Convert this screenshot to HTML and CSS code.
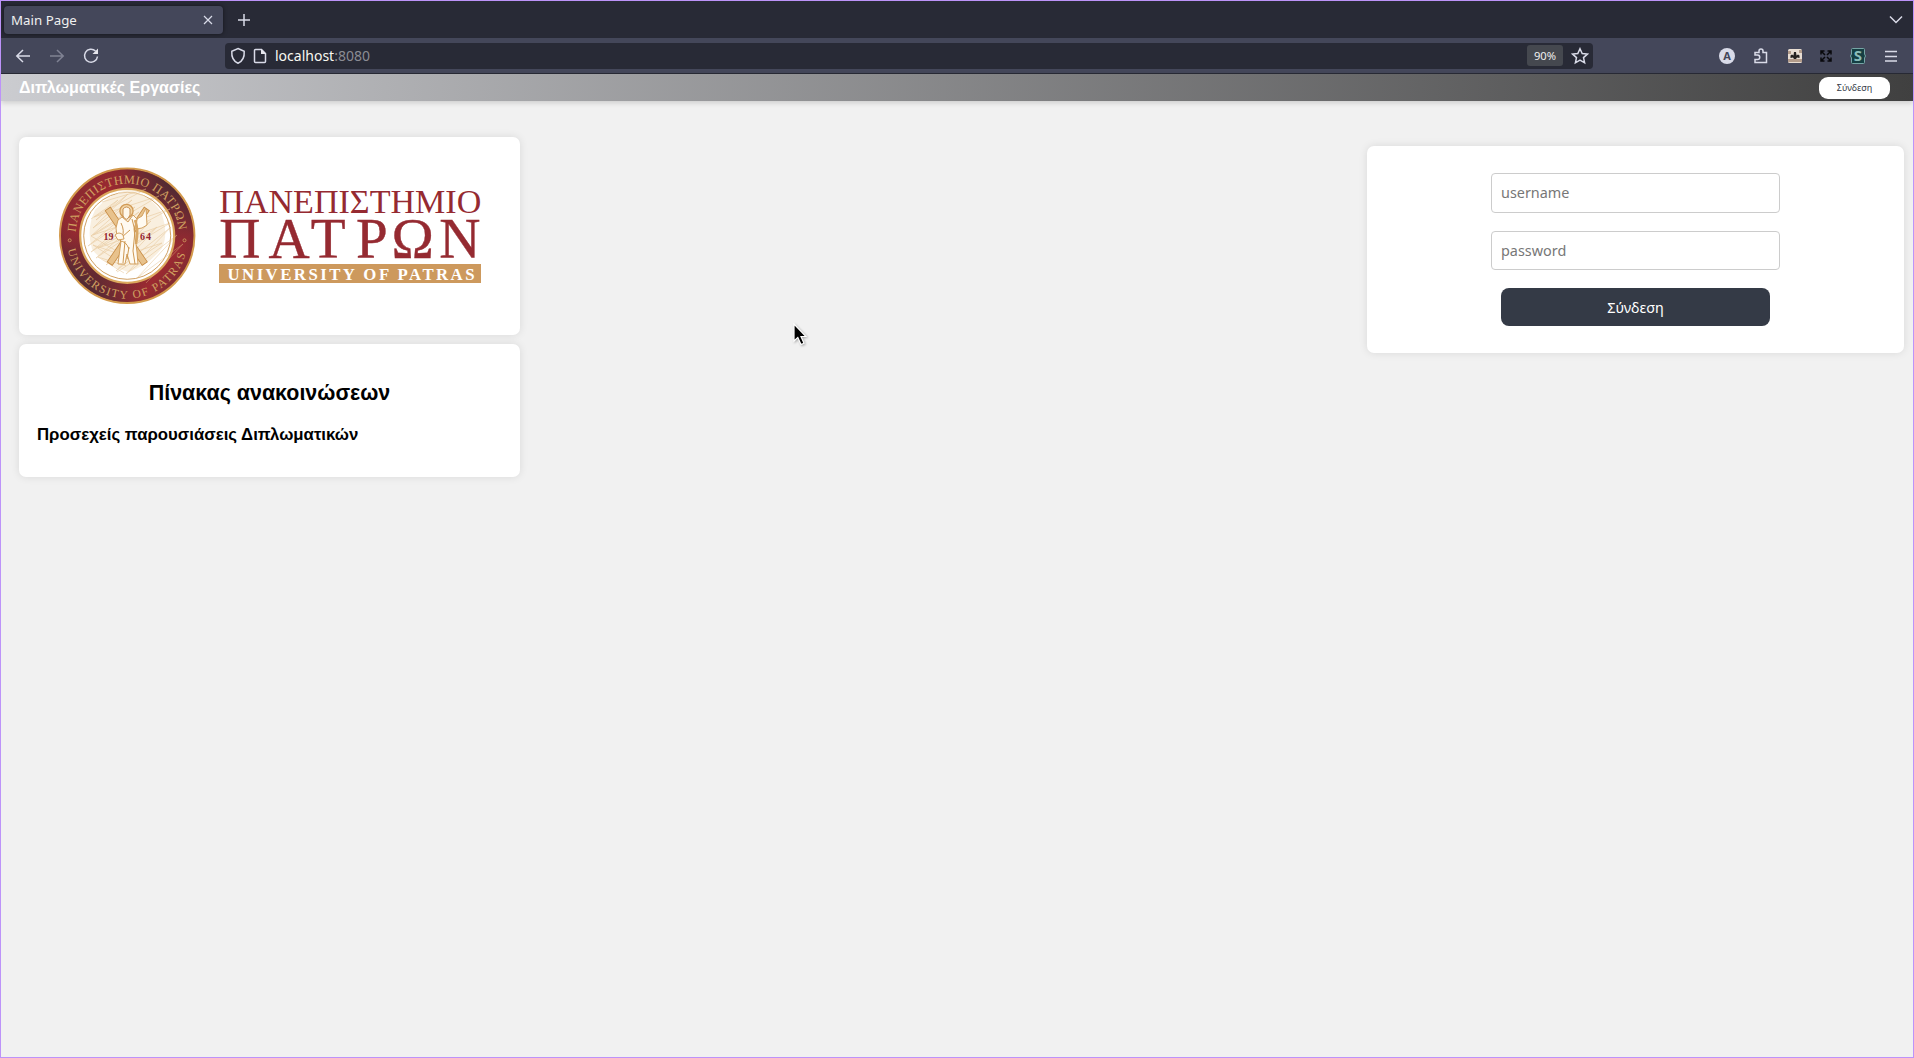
FILE: index.html
```html
<!DOCTYPE html>
<html lang="el">
<head>
<meta charset="utf-8">
<title>Main Page</title>
<link rel="stylesheet" href="styles.css">
</head>
<body>
<div class="window">
  <div class="tabbar">
    <div class="tab"><span>Main Page</span>
      <svg width="10" height="10" viewBox="0 0 10 10"><path d="M1 1l8 8M9 1l-8 8"/></svg>
    </div>
    <svg class="plus" width="14" height="14" viewBox="0 0 14 14"><path d="M7 1v12M1 7h12"/></svg>
    <svg class="chevron" width="14" height="9" viewBox="0 0 14 9"><path d="M1 1.500l6 6 6-6"/></svg>
  </div>
  <div class="toolbar">
    <svg width="16" height="16" viewBox="0 0 16 16"><path d="M15 8H2M8 2L1.800 8 8 14"/></svg>
    <svg class="dim" width="16" height="16" viewBox="0 0 16 16"><path d="M1 8h13M8 2l6.200 6L8 14"/></svg>
    <svg width="16" height="16" viewBox="0 0 16 16"><path d="M12.500 3A6.500 6.500 0 1 0 14.500 8.500"/><path class="solid" d="M15 .5V6H9.500z"/></svg>
    <div class="urlbar">
      <svg width="16" height="18" viewBox="0 0 16 18"><path d="M8 1.500l6.200 2.800c.4 5.500-1.700 10-6.200 12C3.500 14.300 1.400 9.800 1.800 4.300z"/></svg>
      <svg class="page-icon" width="14" height="16" viewBox="0 0 14 16"><path d="M2.500 1.500h6l4 4v8a1 1 0 0 1-1 1h-9a1 1 0 0 1-1-1v-11a1 1 0 0 1 1-1z"/><path class="solid" d="M8 1v5h5z"/></svg>
      <span class="address">localhost<i>:8080</i></span>
      <span class="zoom">90%</span>
      <svg width="18" height="18" viewBox="0 0 18 18"><path d="M9 1.700l2.200 4.800 5.200.6-3.900 3.500 1.100 5.200L9 13.200l-4.600 2.600 1.100-5.200L1.600 7.100l5.200-.6z"/></svg>
    </div>
    <div class="actions">
      <span class="avatar">A</span>
      <svg width="16" height="16" viewBox="0 0 16 16"><path d="M2 7V4.500h4V3a2 2 0 0 1 4 0v1.500h3.500v10H2v-3h2.500a2 2 0 0 0 0-4.500z"/></svg>
      <svg width="14" height="14" viewBox="0 0 14 14"><rect class="tile" width="14" height="14" rx="1.500"/><path class="tile-low" d="M0 10h14v3H0zM0 2h3v3H0zM11 1h3v3h-3z"/><path class="tile-mark" d="M2.500 9V6.500L4 5.500l1.500 1L6 3h2l.5 3.500 1.500-1 1.500 1V9L9 8.500 8 10H6L5 8.500z"/></svg>
      <svg class="expand" width="12" height="12" viewBox="0 0 12 12"><path d="M1 4.500V1h3.500M7.500 1H11v3.500M11 7.500V11H7.500M4.500 11H1V7.500M1 1l4 4M11 1L7 5M11 11L7 7M1 11l4-4"/></svg>
      <svg class="stylus" width="16" height="16" viewBox="0 0 16 16"><path d="M2.500.5h11a1 1 0 0 1 1 1V6l1 2-1 2v4.500a1 1 0 0 1-1 1h-11a1 1 0 0 1-1-1V10l-1-2 1-2V1.500a1 1 0 0 1 1-1z"/><text x="8" y="13.300" text-anchor="middle">S</text></svg>
      <svg width="12" height="12" viewBox="0 0 12 12"><path d="M0 1.500h12M0 6.500h12M0 11h12"/></svg>
    </div>
  </div>
  <header class="site-header">
    <strong>Διπλωματικές Εργασίες</strong>
    <button class="header-login">Σύνδεση</button>
  </header>
  <main class="content">
    <div class="left">
      <section class="card logo">
        <svg width="501" height="198" viewBox="19 137 501 198">
          <defs>
            <linearGradient id="band" x1="0" y1="0.100" x2="1" y2="0.900">
              <stop offset="0" stop-color="#7c2930"/><stop offset=".25" stop-color="#9c2a31"/><stop offset=".5" stop-color="#5c2c33"/><stop offset=".78" stop-color="#9c2a31"/><stop offset="1" stop-color="#642c33"/>
            </linearGradient>
            <linearGradient id="shade" x1="0" y1="1" x2="1" y2="0">
              <stop offset="0.100" stop-color="#412a33"/><stop offset=".4" stop-color="#9a2830" stop-opacity="0"/><stop offset=".6" stop-color="#9a2830" stop-opacity="0"/><stop offset="0.900" stop-color="#412a33"/>
            </linearGradient>
            <path id="arc-top" d="M75.600 232.100A51.700 51.700 0 0 1 178.800 232.100"/>
            <path id="arc-bottom" d="M67.800 249.500A60.500 60.500 0 0 0 186.600 249.500"/>
          </defs>
          <circle cx="127.200" cy="235.800" r="67.200" fill="url(#band)" stroke="#d39a4c" stroke-width="2"/>
          <circle cx="127.200" cy="235.800" r="66.200" fill="url(#shade)"/>
          <circle cx="127.200" cy="235.800" r="47" fill="#fff" stroke="#dba75c" stroke-width="2.200"/>
          <circle cx="127.200" cy="235.800" r="43.500" fill="none" stroke="#c99552" stroke-width=".9"/>
          <path d="M95 210q15-17 33-20 20 3 33 22 8 21 1 36-14 18-34 24-25-8-36-23-6-20 3-39z" fill="#f5e4c9" opacity=".6"/>
          <g fill="none" stroke="#dfb77f" stroke-width=".7" opacity=".6">
            <path d="M91 219l27-19-22 20 32-26-35 34 39-28-41 36 44-29-47 39 51-34-48 40 54-36-49 42 55-37-45 44 51-38-41 44 55-44-45 47 51-39-40 43 46-34-37 39"/>
            <path d="M91 236l34 20-32-11 33 21-28-9 26 16"/>
            <path d="M102 202l44-13-52 28 65-21-66 39 77-26-72 39 72-25-60 37 52-17-45 29"/>
          </g>
          <g>
            <path d="M107.500 208.500l37.500 55.500M147 208.500l-37.500 55.500" stroke="#c88d46" stroke-width="7"/>
            <path d="M108 209.300l36.500 54M146.500 209.300l-36.500 54" stroke="#e8c28c" stroke-width="5.400"/>
          </g>
          <path d="M137 219l5-3 4-8 1 17-5 3-6 1z" fill="#fffaf1" stroke="#ce9852" stroke-width=".9"/>
          <circle cx="126.500" cy="211" r="6.600" fill="#f1d4a6" stroke="#d19a55" stroke-width="1.300"/>
          <path d="M122 217l-4 3-2 8 1 9 4 4-3 23h7l2-10 3 10h8l-1-12-3-23 3-10-4-4-5 7z" fill="#fffaf1" stroke="#ce9852" stroke-width=".9"/>
          <path d="M132 219l3 12-2 20 2 13M121 223q4 8 1 14l8-7M120 241q6 0 9 8M125 241l-2 22M129 247l-2 12" fill="none" stroke="#ce9852" stroke-width="1"/>
          <path d="M135 220q4 10 1 24" fill="none" stroke="#d9a866" stroke-width="2.500"/>
          <path d="M123 209q3.500-4 7 0v6q-3.500 8-7 1z" fill="#fff8eb" stroke="#bb7b36" stroke-width=".8"/>
          <path d="M115 235q4-4 8 0l1 4-6 1z" fill="#fff8eb" stroke="#ce9852" stroke-width=".9"/>
          <g class="serif" font-size="10" font-weight="700" fill="#942630">
            <text x="103.500" y="240" textLength="10">19</text><text x="140" y="240" textLength="11">64</text>
          </g>
          <g class="serif" fill="#d0a160">
            <text font-size="12.300" textLength="154"><textPath href="#arc-top">ΠΑΝΕΠΙΣΤΗΜΙΟ ΠΑΤΡΩΝ</textPath></text>
            <text font-size="11.600" textLength="162"><textPath href="#arc-bottom">UNIVERSITY OF PATRAS</textPath></text>
          </g>
          <g fill="none" stroke="#d0a160" stroke-width=".8"><circle cx="69.700" cy="240.300" r="1.500"/><circle cx="184.500" cy="240.300" r="1.500"/></g>
          <g class="serif" fill="#952a31">
            <text x="219.300" y="213" font-size="34.500" textLength="262" lengthAdjust="spacingAndGlyphs">ΠΑΝΕΠΙΣΤΗΜΙΟ</text>
            <text x="219.300 268.500 310.700 356 391.500 439.300" y="257.700" font-size="57" stroke="#952a31" stroke-width=".4">ΠΑΤΡΩΝ</text>
          </g>
          <rect x="219" y="264" width="262" height="19" fill="#cd995d"/>
          <text class="serif" x="227.500" y="279.500" font-size="16.800" font-weight="700" fill="#fff" textLength="247">UNIVERSITY OF PATRAS</text>
        </svg>
      </section>
      <section class="card news">
        <h2>Πίνακας ανακοινώσεων</h2>
        <h3>Προσεχείς παρουσιάσεις Διπλωματικών</h3>
      </section>
    </div>
    <form class="card login">
      <input type="text" placeholder="username">
      <input type="password" placeholder="password">
      <button type="button">Σύνδεση</button>
    </form>
  </main>
  <svg class="cursor" width="14" height="23" viewBox="0 0 14 23"><path d="M1 1v17l3.800-3.600L8 21.500l3-1.300-3-6.700h5z"/></svg>
</div>
</body>
</html>
```
FILE: styles.css
```css
* { box-sizing: border-box; }
body { margin: 0; font-family: "Noto Sans", sans-serif; }
svg { display: block; flex: none; }
.window {
  position: relative;
  display: flex;
  flex-direction: column;
  width: 1914px;
  height: 1058px;
  border: 1px solid #bd93f9;
  background: #f1f1f1;
  overflow: hidden;
}

/* Browser chrome */
.tabbar {
  display: flex;
  align-items: center;
  height: 37px;
  padding: 0 10px 0 3px;
  background: #282a36;
}
.tabbar svg, .toolbar svg { fill: none; stroke: #d9dbe8; stroke-width: 1.500; }
.tab {
  display: flex;
  align-items: center;
  justify-content: space-between;
  width: 219px;
  height: 28px;
  padding: 0 10px 0 7px;
  border-radius: 4px;
  background: #44475a;
  box-shadow: 0 0 4px rgba(0, 0, 0, .5);
  color: #f0f0f0;
  font-size: 13.300px;
}
.tabbar .tab svg { stroke-width: 1.200; }
.plus { margin: 1px 0 0 14px; }
.chevron { margin-left: auto; }
.toolbar {
  display: flex;
  align-items: center;
  height: 36px;
  padding: 0 16px 0 14px;
  gap: 18px;
  border-bottom: 1px solid #282a36;
  background: #44475a;
}
.toolbar .dim { opacity: .4; }
.toolbar .solid { fill: #e6e6ec; stroke: none; }
.urlbar {
  display: flex;
  align-items: center;
  width: 1368px;
  height: 26px;
  margin-left: 108px;
  padding: 0 4px 0 5px;
  border-radius: 4px;
  background: #282a36;
}
.urlbar .page-icon { margin-left: 7px; }
.address { flex: 1; margin-left: 8px; color: #f8f8f2; font-size: 14px; }
.address i { color: #8b8c93; font-style: normal; }
.zoom {
  width: 36px;
  height: 21px;
  margin-right: 8px;
  border-radius: 3px;
  background: #45484f;
  color: #f0f0f0;
  font-size: 11.200px;
  line-height: 21px;
  text-align: center;
}
.actions {
  display: flex;
  flex: 1;
  align-items: center;
  justify-content: space-between;
  margin-left: 108px;
}
.avatar {
  width: 16px;
  height: 16px;
  border-radius: 50%;
  background: #d9dbe8;
  color: #44475a;
  font-size: 11px;
  font-weight: 700;
  line-height: 16px;
  text-align: center;
}
.toolbar .tile { fill: #e8ddd2; stroke: none; }
.toolbar .tile-low { fill: #b29b8a; stroke: none; }
.toolbar .tile-mark { fill: #24211f; stroke: none; }
.toolbar .expand { stroke: #08090c; }
.toolbar .stylus { margin: 0 1px 0 -1px; }
.toolbar .stylus path { fill: #153f43; stroke: #76a5a5; stroke-width: 1; }
.toolbar .stylus text { fill: #8bbcba; stroke: none; font: 700 15px "Noto Sans", sans-serif; }

/* Site */
.site-header {
  display: flex;
  align-items: center;
  justify-content: space-between;
  height: 27px;
  padding: 0 23px 0 18px;
  background: linear-gradient(to right, #cbccd0, #404040);
  box-shadow: 0 2px 5px rgba(0, 0, 0, .15);
  color: #fff;
  font: 16.080px "Liberation Sans", sans-serif;
}
.header-login {
  width: 71px;
  height: 22px;
  padding: 0;
  border: 0;
  border-radius: 9px;
  background: #fff;
  color: #343a46;
  font: 9px "Noto Sans", sans-serif;
}
.content {
  display: flex;
  justify-content: space-between;
  align-items: flex-start;
  padding: 36px 9px 0 18px;
}
.left { display: flex; flex-direction: column; gap: 9px; width: 501px; }
.card {
  border-radius: 7px;
  background: #fff;
  box-shadow: 0 0 9px rgba(0, 0, 0, .1);
}
.logo { height: 198px; }
.serif { font-family: "Liberation Serif", serif; }
.news {
  height: 133px;
  padding: 18px;
  color: #000;
  font-family: "Liberation Sans", sans-serif;
}
.news h2 { margin: 18px 0 19px; font-size: 21.450px; line-height: 26px; text-align: center; }
.news h3 { margin: 0; font-size: 16.780px; line-height: 19px; }
.login {
  display: flex;
  flex-direction: column;
  align-items: center;
  gap: 18px;
  width: 537px;
  height: 207px;
  margin-top: 9px;
  padding-top: 27px;
}
.login input {
  width: 289px;
  height: 39.500px;
  padding: 0 9px;
  border: 1px solid #ccc;
  border-radius: 4px;
  background: #fff;
  font: 14.400px "Noto Sans", sans-serif;
}
.login input::placeholder { color: #777; }
.login button {
  width: 269px;
  height: 38px;
  border: 0;
  border-radius: 8px;
  background: #343a46;
  color: #fff;
  font: 14.400px "Noto Sans", sans-serif;
}
.cursor {
  position: absolute;
  left: 792px;
  top: 322px;
  fill: #000;
  stroke: #fff;
  stroke-width: 1.200;
  filter: drop-shadow(1px 1px 1px rgba(0, 0, 0, .3));
}
```
